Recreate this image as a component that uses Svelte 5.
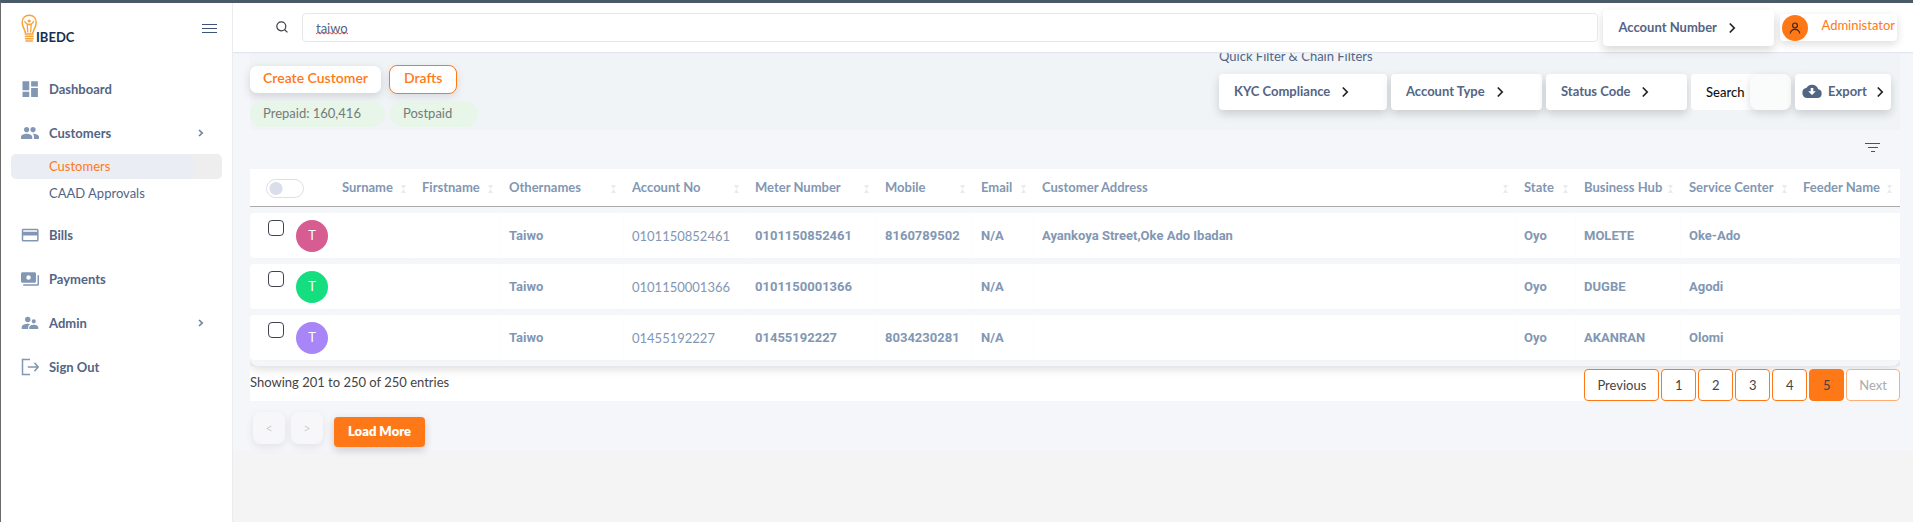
<script>
  const nav = [
    { label: 'Dashboard', icon: 'dashboard' },
    {
      label: 'Customers',
      icon: 'people',
      expandable: true,
      children: [
        { label: 'Customers', active: true },
        { label: 'CAAD Approvals', active: false }
      ]
    },
    { label: 'Bills', icon: 'card' },
    { label: 'Payments', icon: 'payments' },
    { label: 'Admin', icon: 'admin', expandable: true },
    { label: 'Sign Out', icon: 'signout' }
  ];

  const filters = [
    { label: 'KYC Compliance', size: 'large' },
    { label: 'Account Type', size: 'medium' },
    { label: 'Status Code', size: 'small' }
  ];

  const columns = [
    { label: 'Surname', width: 80 },
    { label: 'Firstname', width: 87 },
    { label: 'Othernames', width: 123 },
    { label: 'Account No', width: 123 },
    { label: 'Meter Number', width: 130 },
    { label: 'Mobile', width: 96 },
    { label: 'Email', width: 61 },
    { label: 'Customer Address', width: null },
    { label: 'State', width: 60 },
    { label: 'Business Hub', width: 105 },
    { label: 'Service Center', width: 114 },
    { label: 'Feeder Name', width: 105 }
  ];

  const rows = [
    { color: '#d65c91', account: '0101150852461', meter: '0101150852461', mobile: '8160789502', address: 'Ayankoya Street,Oke Ado Ibadan', hub: 'MOLETE', center: 'Oke-Ado' },
    { color: '#15de80', account: '0101150001366', meter: '0101150001366', mobile: '', address: '', hub: 'DUGBE', center: 'Agodi' },
    { color: '#a986f8', account: '01455192227', meter: '01455192227', mobile: '8034230281', address: '', hub: 'AKANRAN', center: 'Olomi' }
  ];

  const pages = ['1', '2', '3', '4', '5'];
  let query = $state('taiwo');
  let current = $state('5');
  let quick = $state('');
</script>

{#snippet chevron()}
  <svg class="chevron" width="8" height="12" viewBox="0 0 8 12" aria-hidden="true">
    <path d="M1.800 1.500 6.200 6 1.800 10.500" fill="none" stroke="currentColor" stroke-width="1.700" />
  </svg>
{/snippet}

{#snippet navIcon(name)}
  <svg width="18" height="18" viewBox="0 0 24 24" fill="currentColor" aria-hidden="true">
    {#if name === 'dashboard'}
      <path d="M2 1.500h9v12h-9zM13.500 1.500h9v7h-9zM13.500 10.500h9v12h-9zM2 15.500h9v7h-9z" />
    {:else if name === 'people'}
      <path d="M16 11c1.900 0 3.500-1.600 3.500-3.500S17.900 4 16 4s-3.500 1.600-3.500 3.500S14.100 11 16 11zm-8.500 0C9.400 11 11 9.400 11 7.500S9.400 4 7.500 4 4 5.600 4 7.500 5.600 11 7.500 11zm0 2C4.700 13 0 14.200 0 17v3h15v-3c0-2.800-4.700-4-7.500-4zm9 0-1 .1c1.200.9 1.800 2.200 1.800 3.900v3H24v-3c0-2.800-4.700-4-7.500-4z" />
    {:else if name === 'card'}
      <path fill-rule="evenodd" d="M3 3.500h18.500c1.100 0 2 .9 2 2v13c0 1.100-.9 2-2 2H3c-1.100 0-2-.9-2-2v-13c0-1.100.9-2 2-2zm0 2v2h18.500v-2zm0 7v6h18.500v-6z" />
    {:else if name === 'payments'}
      <path fill-rule="evenodd" d="M2 3h16c1.100 0 2 .9 2 2v10c0 1.100-.9 2-2 2H2c-1.100 0-2-.9-2-2V5c0-1.100.9-2 2-2zm8 4a3 3 0 1 0 0 6 3 3 0 0 0 0-6zM22 7h2v12c0 1.100-.9 2-2 2H3v-2h19z" />
    {:else if name === 'admin'}
      <path d="M17 12.500a2.700 2.700 0 1 0 0-5.500 2.700 2.700 0 0 0 0 5.500zM9 11a3.600 3.600 0 1 0 0-7.200A3.600 3.600 0 0 0 9 11zm8 3.400c-2.100 0-6 1.100-6 3.300V20h12v-2.300c0-2.200-3.900-3.300-6-3.300zM9 13c-2.700 0-8 1.300-8 4v3h8.500v-2.300c0-1 .4-2.700 2.700-4.200C11.100 13.200 9.900 13 9 13z" />
    {:else}
      <path d="M12 2H2v20h10M9 12h14M18 6.500l5 5.500-5 5.500" fill="none" stroke="currentColor" stroke-width="2" />
    {/if}
  </svg>
{/snippet}

<div class="app">
  <aside>
    <div class="brand">
      <svg width="56" height="30" viewBox="0 0 56 30" role="img" aria-label="IBEDC">
        <g fill="none" stroke="#f5a43c" stroke-width="1.500" stroke-linecap="round">
          <path d="M4.500 20C4.500 16 1.200 13.500 1.200 8.500C1.200 4 4 1.200 8.200 1.200s7 2.800 7 7.300c0 5-3.400 7.500-3.400 11.500z" />
          <path d="M3.800 7.500c1 2 2.700 3 4.400 3s3.400-1 4.400-3M6.200 11l.6 7M10.200 11l-.6 7" stroke-width="1.300" />
          <path d="M4.500 22.200h7.500M4.500 24.600h7.500M5 27h6.400" stroke-width="1.600" />
        </g>
        <circle cx="8.200" cy="7" r="1.600" fill="#f5a43c" />
        <text x="15" y="28">IBEDC</text>
      </svg>
      <button class="menu" aria-label="Toggle menu"><i></i><i></i><i></i></button>
    </div>
    <nav>
      {#each nav as item}
        <a class="item" href="#top">
          <span class="icon">{@render navIcon(item.icon)}</span>
          {item.label}
          {#if item.expandable}
            <svg class="caret" width="6" height="8" viewBox="0 0 6 8" aria-hidden="true">
              <path d="M1 1l3.200 3L1 7" fill="none" stroke="currentColor" stroke-width="1.700" />
            </svg>
          {/if}
        </a>
        {#if item.children}
          <div class="children">
            {#each item.children as child}
              <a class="child" class:active={child.active} href="#top">{child.label}</a>
            {/each}
          </div>
        {/if}
      {/each}
    </nav>
  </aside>

  <main>
    <header>
      <svg class="search-icon" width="12" height="12" viewBox="0 0 12 12" aria-hidden="true">
        <circle cx="5.300" cy="5.300" r="4.500" fill="none" stroke="#3d3d45" stroke-width="1.200" />
        <path d="M8.600 8.600l2.800 2.800" stroke="#3d3d45" stroke-width="1.300" />
      </svg>
      <div class="query">
        <input aria-label="Search customers" bind:value={query} spellcheck="false" />
        <svg class="squiggle" width="32" height="3" viewBox="0 0 32 3" aria-hidden="true">
          <path d="M0 2l2-1.500 2 1.500 2-1.500 2 1.500 2-1.500 2 1.500 2-1.500 2 1.500 2-1.500 2 1.500 2-1.500 2 1.500 2-1.500 2 1.500 2-1.500 2 1.500" fill="none" stroke="#e8443c" stroke-width="1" />
        </svg>
      </div>
      <button class="drop field">Account Number {@render chevron()}</button>
      <button class="profile">
        <span class="avatar-icon">
          <svg width="12" height="12" viewBox="0 0 12 12" fill="none" stroke="#3b2a20" stroke-width="1.200" aria-hidden="true">
            <circle cx="6" cy="3.400" r="2.400" />
            <path d="M1.200 11.500C1.700 8.600 3.500 7.300 6 7.300s4.300 1.300 4.800 4.200" />
          </svg>
        </span>
        <span class="profile-name">Administator</span>
      </button>
    </header>

    <div class="page">
      <section class="toolbar">
        <div class="left">
          <div class="actions">
            <button class="create">Create Customer</button>
            <button class="drafts">Drafts</button>
          </div>
          <div class="chips">
            <span class="chip wide">Prepaid: 160,416</span>
            <span class="chip">Postpaid</span>
          </div>
        </div>
        <div class="right">
          <p>Quick Filter &amp; Chain Filters</p>
          <div class="filters">
            {#each filters as filter}
              <button class="drop {filter.size}">{filter.label} {@render chevron()}</button>
            {/each}
            <label class="quick">Search <input bind:value={quick} /></label>
            <button class="drop export">
              <svg width="20" height="14" viewBox="0 0 20 14" aria-hidden="true">
                <path fill="#536585" d="M16.200 5.300A6.400 6.400 0 0 0 4.600 3.700 5.200 5.200 0 0 0 5.300 14h10.200a4.400 4.400 0 0 0 .7-8.700z" />
                <path fill="#fff" d="M8.700 4h2.600v3.200h2.500L10 11 6.200 7.200h2.500z" />
              </svg>
              Export {@render chevron()}
            </button>
          </div>
        </div>
      </section>

      <div class="filter-row">
        <button class="filter-toggle" aria-label="Toggle filters"><i></i><i></i><i></i></button>
      </div>

      <div class="table-wrap">
        <table>
          <colgroup>
            <col class="select-col" />
            {#each columns as column}
              <col style:width={column.width ? `${column.width}px` : 'auto'} />
            {/each}
          </colgroup>
          <thead>
            <tr>
              <th><input class="switch" type="checkbox" aria-label="Select all" /></th>
              {#each columns as column}
                <th>
                  <span class="head">
                    {column.label}
                    <svg class="sort" width="5" height="8" viewBox="0 0 5 8" aria-hidden="true">
                      <path d="M0 0h5L2.500 4zM0 8h5L2.500 4z" fill="#e9ebef" />
                    </svg>
                  </span>
                </th>
              {/each}
            </tr>
          </thead>
          <tbody>
            {#each rows as row}
              <tr>
                <td>
                  <span class="select">
                    <input type="checkbox" aria-label="Select account {row.account}" />
                    <span class="avatar" style:background={row.color}>T</span>
                  </span>
                </td>
                <td class="open"></td>
                <td></td>
                <td>Taiwo</td>
                <td class="light">{row.account}</td>
                <td>{row.meter}</td>
                <td>{row.mobile}</td>
                <td>N/A</td>
                <td>{row.address}</td>
                <td>Oyo</td>
                <td>{row.hub}</td>
                <td>{row.center}</td>
                <td></td>
              </tr>
            {/each}
          </tbody>
        </table>
      </div>

      <footer>
        <span class="summary">Showing 201 to 250 of 250 entries</span>
        <div class="pages">
          <button class="text">Previous</button>
          {#each pages as page}
            <button class:current={page === current} onclick={() => (current = page)}>{page}</button>
          {/each}
          <button class="text" disabled>Next</button>
        </div>
      </footer>

      <div class="more">
        <button class="step" aria-label="Previous batch" disabled>&lt;</button>
        <button class="step" aria-label="Next batch" disabled>&gt;</button>
        <button class="load">Load More</button>
      </div>
    </div>
  </main>
</div>

<style>
  :global(body) {
    background: #f4f4f4;
  }

  .app {
    box-sizing: border-box;
    display: flex;
    min-height: 100vh;
    border-top: 3px solid #485b66;
    border-left: 1px solid #6a6a6a;
    font: 13px/20px Lato, sans-serif;
    color: #536585;
  }

  .app :global(*) {
    box-sizing: border-box;
  }

  button,
  input {
    font: inherit;
    color: inherit;
    margin: 0;
  }

  button {
    border: 0;
    padding: 0;
    background: none;
    white-space: nowrap;
    cursor: pointer;
  }

  svg {
    display: block;
    flex: none;
  }

  aside {
    flex: none;
    width: 232px;
    background: #fff;
    border-right: 1px solid #ebecf0;
  }

  .brand {
    display: flex;
    justify-content: space-between;
    padding: 11px 15px 0 20px;
    height: 64px;
  }

  .brand text {
    font: 700 13px Lato, sans-serif;
    fill: #182e50;
  }

  .menu {
    display: flex;
    flex-direction: column;
    gap: 3px;
    height: 10px;
    margin-top: 10px;
  }

  .menu i {
    width: 15px;
    height: 1px;
    background: #405275;
  }

  .item {
    display: flex;
    align-items: center;
    height: 44px;
    padding: 0 20px;
    font-weight: 700;
    color: inherit;
    text-decoration: none;
  }

  .icon {
    width: 28px;
    color: #8297b3;
  }

  .caret {
    margin-left: auto;
    margin-right: 8px;
    color: #71839f;
  }

  .children {
    display: grid;
    gap: 2px;
    padding: 0 10px 7px;
    margin-top: -1px;
  }

  .child {
    padding: 2px 38px 3px;
    border-radius: 5px;
    color: inherit;
    text-decoration: none;
  }

  .child.active {
    color: #ff7818;
    background: linear-gradient(90deg, #eaedf3 86%, #eeeeee 87%);
  }

  main {
    flex: 1;
    min-width: 0;
  }

  header {
    position: relative;
    z-index: 2;
    display: flex;
    align-items: center;
    height: 49px;
    padding-right: 16px;
    background: #fff;
    box-shadow: 0 1px 1px #e2e7ef;
  }

  .search-icon {
    margin: 0 14px 2px 43px;
  }

  .query {
    position: relative;
    flex: 1;
    min-width: 0;
  }

  .query input {
    display: block;
    width: 100%;
    height: 29px;
    padding: 0 13px;
    border: 1px solid #e6e7ea;
    border-radius: 4px;
    background: #fff;
    outline: 0;
  }

  .squiggle {
    position: absolute;
    left: 14px;
    bottom: 7px;
  }

  .drop {
    display: flex;
    align-items: center;
    gap: 11px;
    height: 36px;
    padding: 0 15px 2px;
    border-radius: 4px;
    background: #fff;
    font-weight: 700;
    box-shadow: 0 4px 10px rgba(0, 0, 0, 0.16);
  }

  .chevron {
    margin-top: 2px;
    color: #222;
  }

  .field {
    width: 171px;
    margin: 0 6px 0 5px;
  }

  .profile {
    display: flex;
    align-items: center;
    gap: 13px;
    height: 27px;
    padding: 0 2px;
    border-radius: 4px;
    background: #fff;
    color: #ff7818;
    box-shadow: 0 3px 8px rgba(0, 0, 0, 0.14);
  }

  .avatar-icon {
    display: grid;
    flex: none;
    place-items: center;
    width: 26px;
    height: 26px;
    border-radius: 50%;
    background: #ff7818;
  }

  .profile-name {
    padding-bottom: 6px;
  }

  .page {
    padding: 0 13px 1px 17px;
    background: #f4f6fa;
  }

  .toolbar {
    display: flex;
    justify-content: space-between;
    height: 78px;
    padding-right: 9px;
    background: #f0f4f7;
  }

  .left {
    padding-top: 13px;
  }

  .actions {
    display: flex;
    align-items: center;
    gap: 8px;
    font-size: 14px;
    font-weight: 600;
    color: #ff7818;
  }

  .create {
    height: 27px;
    padding: 0 13px 4px;
    border-radius: 7px;
    background: #fff;
    box-shadow: 0 3px 10px rgba(0, 0, 0, 0.14);
  }

  .drafts {
    height: 29px;
    padding: 0 14px 4px;
    border: 1px solid #ff7818;
    border-radius: 8px;
    background: #fff;
    box-shadow: 0 3px 8px rgba(0, 0, 0, 0.1);
  }

  .chips {
    display: flex;
    gap: 5px;
    margin-top: 7px;
  }

  .chip {
    width: 88px;
    height: 26px;
    padding: 2px 13px;
    border-radius: 13px;
    background: #e8f5e9;
    color: #747c78;
  }

  .chip.wide {
    width: 135px;
  }

  .right {
    margin-top: -6px;
  }

  p {
    margin: 0 0 8px;
  }

  .filters {
    display: flex;
    gap: 4px;
  }

  .large {
    width: 168px;
  }

  .medium {
    width: 151px;
  }

  .small {
    width: 141px;
  }

  .quick {
    display: flex;
    align-items: center;
    justify-content: space-between;
    width: 100px;
    height: 36px;
    padding-left: 15px;
    border-radius: 4px 8px 8px 4px;
    background: #fff;
    color: #111;
    font-weight: 500;
  }

  .quick input {
    width: 41px;
    height: 36px;
    border: 0;
    border-radius: 8px;
    background: #fafbfb;
    box-shadow: 0 3px 10px rgba(0, 0, 0, 0.14);
  }

  .export {
    width: 96px;
    gap: 6px;
    padding: 0 7px 2px;
  }

  .export :global(.chevron) {
    margin-left: auto;
  }

  .filter-row {
    display: flex;
    justify-content: flex-end;
    height: 33px;
    padding: 13px 20px 0;
  }

  .filter-toggle {
    display: flex;
    flex-direction: column;
    align-items: center;
    gap: 3px;
    height: 10px;
  }

  .filter-toggle i {
    width: 15px;
    height: 1px;
    background: #405275;
  }

  .filter-toggle i:nth-child(2) {
    width: 10px;
  }

  .filter-toggle i:nth-child(3) {
    width: 4px;
  }

  .table-wrap {
    position: relative;
    border-radius: 0 0 8px 8px;
    background: #f4f6fa;
    box-shadow: 0 4px 8px rgba(0, 0, 0, 0.12);
    clip-path: inset(0 0 -20px 0);
  }

  table {
    width: 100%;
    table-layout: fixed;
    border-collapse: separate;
    border-spacing: 0 6px;
    color: #8297b3;
  }

  .select-col {
    width: 84px;
  }

  th {
    height: 38px;
    padding: 0 8px 2px;
    border-bottom: 1px solid #a9a9a9;
    background: #fff;
    text-align: left;
    font-weight: 700;
    white-space: nowrap;
  }

  .head {
    display: flex;
    align-items: center;
    justify-content: space-between;
  }

  .sort {
    margin-top: 4px;
  }

  .switch {
    appearance: none;
    display: block;
    width: 38px;
    height: 19px;
    margin: 3px 0 0 8px;
    border: 1px solid #dcdfe9;
    border-radius: 10px;
    background: radial-gradient(circle at 9px 50%, #d9deea 6px, #fff 7px);
  }

  td {
    height: 45px;
    padding: 0 8px;
    border-right: 1px solid #fdfdfe;
    background: #fff;
    box-shadow: 0 1px 1px -1px #e8eaf0;
    font: 700 13px/20px Roboto, sans-serif;
    white-space: nowrap;
  }

  td:first-child {
    border-radius: 4px 0 0 4px;
  }

  td.open,
  td:last-child {
    border-right: 0;
  }

  td.light {
    font: 13px/20px Lato, sans-serif;
  }

  .select {
    display: flex;
    align-items: flex-start;
    gap: 12px;
    padding-left: 10px;
  }

  .select input {
    flex: none;
    appearance: none;
    width: 16px;
    height: 16px;
    border: 1px solid #44444e;
    border-radius: 4px;
    background: #fff;
  }

  .avatar {
    flex: none;
    width: 32px;
    height: 32px;
    border-radius: 50%;
    color: #fff;
    font: 13px/30px Lato, sans-serif;
    text-align: center;
  }

  footer {
    display: flex;
    justify-content: space-between;
    height: 35px;
    padding-top: 3px;
    background: #fff;
    color: #444;
  }

  .summary {
    padding-top: 3px;
  }

  .pages {
    position: relative;
    display: flex;
    gap: 2px;
  }

  .pages button {
    width: 35px;
    height: 32px;
    border: 1px solid #ff7818;
    border-radius: 4px;
    background: #fff;
  }

  .pages .text {
    width: auto;
    padding: 0 12px;
  }

  .pages .current {
    background: #ff7818;
  }

  .pages button:disabled {
    border-color: #ffae74;
    color: #aaa;
  }

  .more {
    display: flex;
    gap: 6px;
    padding: 11px 3px 3px;
  }

  .step {
    width: 32px;
    height: 32px;
    border-radius: 8px;
    background: #f7f7f9;
    color: #d0d0d4;
    box-shadow: 0 3px 8px rgba(0, 0, 0, 0.08);
  }

  .load {
    height: 30px;
    margin: 5px 0 0 5px;
    padding: 0 14px 2px;
    border-radius: 4px;
    background: #ff7818;
    color: #fff;
    font-weight: 800;
    box-shadow: 0 3px 8px rgba(0, 0, 0, 0.18);
  }
</style>
